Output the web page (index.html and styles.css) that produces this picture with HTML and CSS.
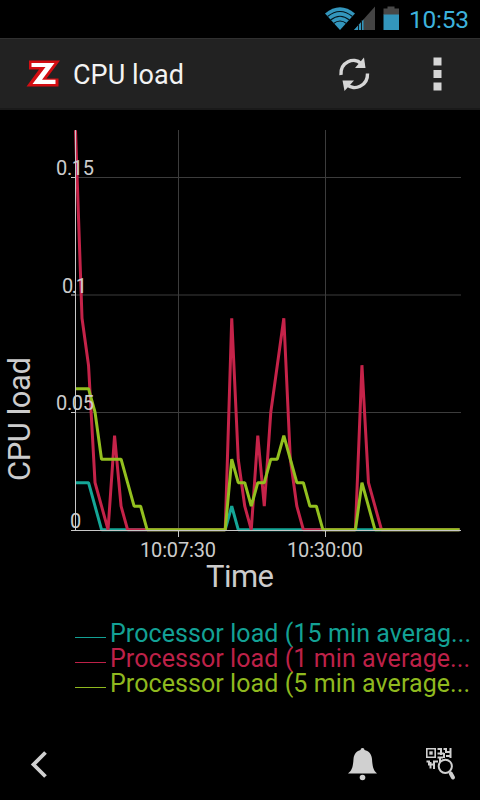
FILE: index.html
```
<!DOCTYPE html>
<html>
<head>
    <meta charset="utf-8">
    <title>CPU load</title>
    <link rel="stylesheet" href="styles.css">
</head>
<body>

    <div class="statusbar">
        <svg class="signals" width="76" height="38" viewBox="325 0 76 38">
            <!-- wifi -->
            <path fill="#3396bd" d="M340 30L325 13.500Q340 1 355 13.500Z"/>
            <g fill="none" stroke="#05141b" stroke-width="1.100">
                <path d="M327.500 16.500Q340 6.500 352.500 16.500"/>
                <path d="M330.500 20Q340 12.500 349.500 20"/>
                <path d="M333.500 23.500Q340 18.500 346.500 23.500"/>
            </g>
            <!-- mobile signal -->
            <path fill="#444" d="M354 30L375 6.500V30Z"/>
            <path fill="#3396bd" d="M354 30L363.500 19.400V30Z"/>
            <path stroke="#10191d" d="M358.500 24V30M361.500 20V30"/>
            <!-- battery -->
            <path fill="#484848" d="M383.500 8.500H387.500V6.500H394.500V8.500H399V15H383.500Z"/>
            <path fill="#3396bd" d="M383.500 14.500H399V30H383.500Z"/>
        </svg>
        <svg class="clock" width="62" height="38">
            <text x="0" y="28" textLength="60">10:53</text>
        </svg>
    </div>

    <div class="actionbar">
        <svg class="logo" width="36" height="32" viewBox="26 58 36 32">
            <path fill="#d40d12" d="M29 60.500H60L46.500 78.500H58.500V86.500H26.500L39 69.500H29Z"/>
            <path fill="#fff" d="M31.500 63H54.500L42 79.800H55.500V84H32.500L45.500 67H31.500Z"/>
        </svg>
        <svg class="title" width="114" height="40">
            <text x="-1" y="30" textLength="111">CPU load</text>
        </svg>
        <svg class="refresh" width="34" height="36" viewBox="337 56 34 36">
            <g fill="none" stroke="#d6d6d6" stroke-width="3.400">
                <path d="M341 75C340 62 354 56.500 361 63.500"/>
                <path d="M367.500 73.500C368 86 354 91.500 347 84.500"/>
            </g>
            <path fill="#d6d6d6" d="M364 57.500L365.500 68H355Z"/>
            <path fill="#d6d6d6" d="M344.500 91L342.500 80.500H354Z"/>
        </svg>
        <svg class="more" width="10" height="36" viewBox="433 56 10 36">
            <path fill="#d6d6d6" d="M433.500 57.500H441.500V65.500H433.500ZM433.500 70H441.500V78H433.500ZM433.500 82.500H441.500V90.500H433.500Z"/>
        </svg>
    </div>

    <svg class="chart" width="480" height="490" viewBox="0 110 480 490">
        <path class="grid" d="M75 177.500H461M75 295H461M75 412.500H461M178.500 130V530M325.500 130V530"/>
        <g id="series"></g>
        <path class="axis" d="M75.500 130V530.500M71 530.500H461M71 177.500H76M71 295H76M71 412.500H76M178.500 530V537M325.500 530V537"/>
        <g class="tick">
            <text x="56" y="175" textLength="38">0.15</text>
            <text x="62" y="293" textLength="25">0.1</text>
            <text x="56" y="410" textLength="38">0.05</text>
            <text x="70" y="528">0</text>
            <text x="140" y="557" textLength="76">10:07:30</text>
            <text x="287" y="557" textLength="76">10:30:00</text>
        </g>
        <g class="label">
            <text x="206" y="587" textLength="68">Time</text>
            <text transform="translate(30 481) rotate(-90)" textLength="124">CPU load</text>
        </g>
    </svg>

    <div class="legend">
        <div class="item avg15"><span class="line"></span><svg width="366" height="25"><text x="0" y="19" textLength="361">Processor load (15 min averag...</text></svg></div>
        <div class="item avg1"><span class="line"></span><svg width="366" height="25"><text x="0" y="19" textLength="360">Processor load (1 min average...</text></svg></div>
        <div class="item avg5"><span class="line"></span><svg width="366" height="25"><text x="0" y="19" textLength="360">Processor load (5 min average...</text></svg></div>
    </div>

    <div class="bottombar">
        <svg class="back" width="18" height="30" viewBox="30 749 18 30">
            <path fill="none" stroke="#d0d0d0" stroke-width="3.800" d="M45.500 752.500L33.500 764.500L45.500 776.500"/>
        </svg>
        <svg class="bell" width="30" height="34" viewBox="348 747 30 34">
            <path fill="#d0d0d0" d="M348 773.500C352.500 770 353 766 353.500 759C354 753.500 357 751 360.500 750Q360.500 748 362.500 748Q364.500 748 364.500 750C368.500 751 371.500 753.500 372 759C372.500 766 373 770 377 773.500Z"/>
            <circle fill="#d0d0d0" cx="362.500" cy="777.500" r="2.800"/>
        </svg>
        <svg class="scan" width="32" height="34" viewBox="425 747 32 34">
            <path fill="none" stroke="#d0d0d0" stroke-width="1.600" d="M426.800 748.800H435.200V757.200H426.800Z"/>
            <path fill="#d0d0d0" d="M429.300 751.300h3.400v3.400h-3.400z"/>
            <path fill="none" stroke="#d0d0d0" stroke-width="2" d="M437.500 749H441V755M437.500 753.500H444M443.500 749H446V752H451M450.500 748V758M446 756H451M444 758V753M437.500 757.500H443M440 757V762M426.500 761.500H429V764M428 764.500H435M430.500 762V768.500M434 769V761.500H438"/>
            <circle fill="#000" stroke="#d0d0d0" stroke-width="2" cx="445.300" cy="766.300" r="6.600"/>
            <path stroke="#d0d0d0" stroke-width="4" stroke-linecap="round" d="M450.800 773.500L453 777.500"/>
        </svg>
    </div>

    <script>
        // samples are in hundredths, one every 6.51px
        var samples = 60;
        var series = {
            avg15: {0: 2, 1: 2, 2: 2, 3: 1, 24: 1},
            avg1: {0: 17, 1: 9, 2: 7, 3: 2, 4: 1, 6: 4, 7: 1, 24: 9, 25: 3, 26: 1, 28: 4, 29: 1,
                   30: 5, 31: 7, 32: 9, 33: 3, 34: 1, 44: 7, 45: 2, 46: 1},
            avg5: {0: 6, 1: 6, 2: 6, 3: 5, 4: 3, 5: 3, 6: 3, 7: 3, 8: 2, 9: 1, 10: 1,
                   24: 3, 25: 2, 26: 2, 27: 1, 28: 2, 29: 2, 30: 3, 31: 3, 32: 4, 33: 3,
                   34: 2, 35: 2, 36: 1, 37: 1, 44: 2, 45: 1}
        };

        for (var name in series) {
            var points = [];
            for (var i = 0; i < samples; i++) {
                points.push((75.5 + i * 6.51) + ',' + (529.7 - (series[name][i] || 0) * 23.5));
            }
            var line = document.createElementNS('http://www.w3.org/2000/svg', 'polyline');
            line.setAttribute('class', name);
            line.setAttribute('points', points.join(' '));
            document.getElementById('series').appendChild(line);
        }
    </script>
</body>
</html>
```
FILE: styles.css
```
body {
    margin: 0;
    width: 480px;
    height: 800px;
    overflow: hidden;
    display: flex;
    flex-direction: column;
    background: #000;
    font-family: "Roboto", sans-serif;
}

svg {
    display: block;
    flex: none;
    overflow: visible;
}

.statusbar {
    height: 38px;
    display: flex;
    justify-content: flex-end;
    gap: 8px;
    padding-right: 9px;
}

.clock text {
    font-size: 24.5px;
    fill: #3db2dd;
}

.actionbar {
    height: 72px;
    box-sizing: border-box;
    display: flex;
    align-items: center;
    background: #222;
    border-top: 1px solid #303030;
    border-bottom: 2px solid #1a1a1a;
    padding-left: 26px;
}

.title {
    margin-left: 12px;
}

.title text {
    font-size: 27px;
    fill: #f3f3f3;
}

.refresh {
    margin-left: 149px;
}

.more {
    margin-left: 62px;
}

.grid {
    stroke: #3c3c3c;
}

.axis {
    stroke: #c8c8c8;
    fill: none;
}

#series polyline {
    fill: none;
    stroke-width: 3;
    stroke-linejoin: bevel;
}

#series .avg15 { stroke: #15a697; }
#series .avg1 { stroke: #c52349; }
#series .avg5 { stroke: #93c01f; }

.tick text {
    font-size: 20px;
    fill: #ccc;
}

.label text {
    font-size: 31px;
    fill: #ccc;
}

.legend {
    height: 128px;
    box-sizing: border-box;
    padding: 23px 0 0 75px;
}

.item {
    height: 25px;
    display: flex;
    align-items: flex-start;
    gap: 4px;
}

.line {
    width: 31px;
    height: 1px;
    margin-top: 14px;
    background: currentColor;
}

.item text {
    font-size: 25px;
    fill: currentColor;
}

.avg15 { color: #13a195; }
.avg1 { color: #bd2148; }
.avg5 { color: #8fb91f; }

.bottombar {
    height: 72px;
    display: flex;
    align-items: center;
    padding-left: 30px;
}

.bell {
    margin-left: 300px;
}

.scan {
    margin-left: 47px;
}
```
